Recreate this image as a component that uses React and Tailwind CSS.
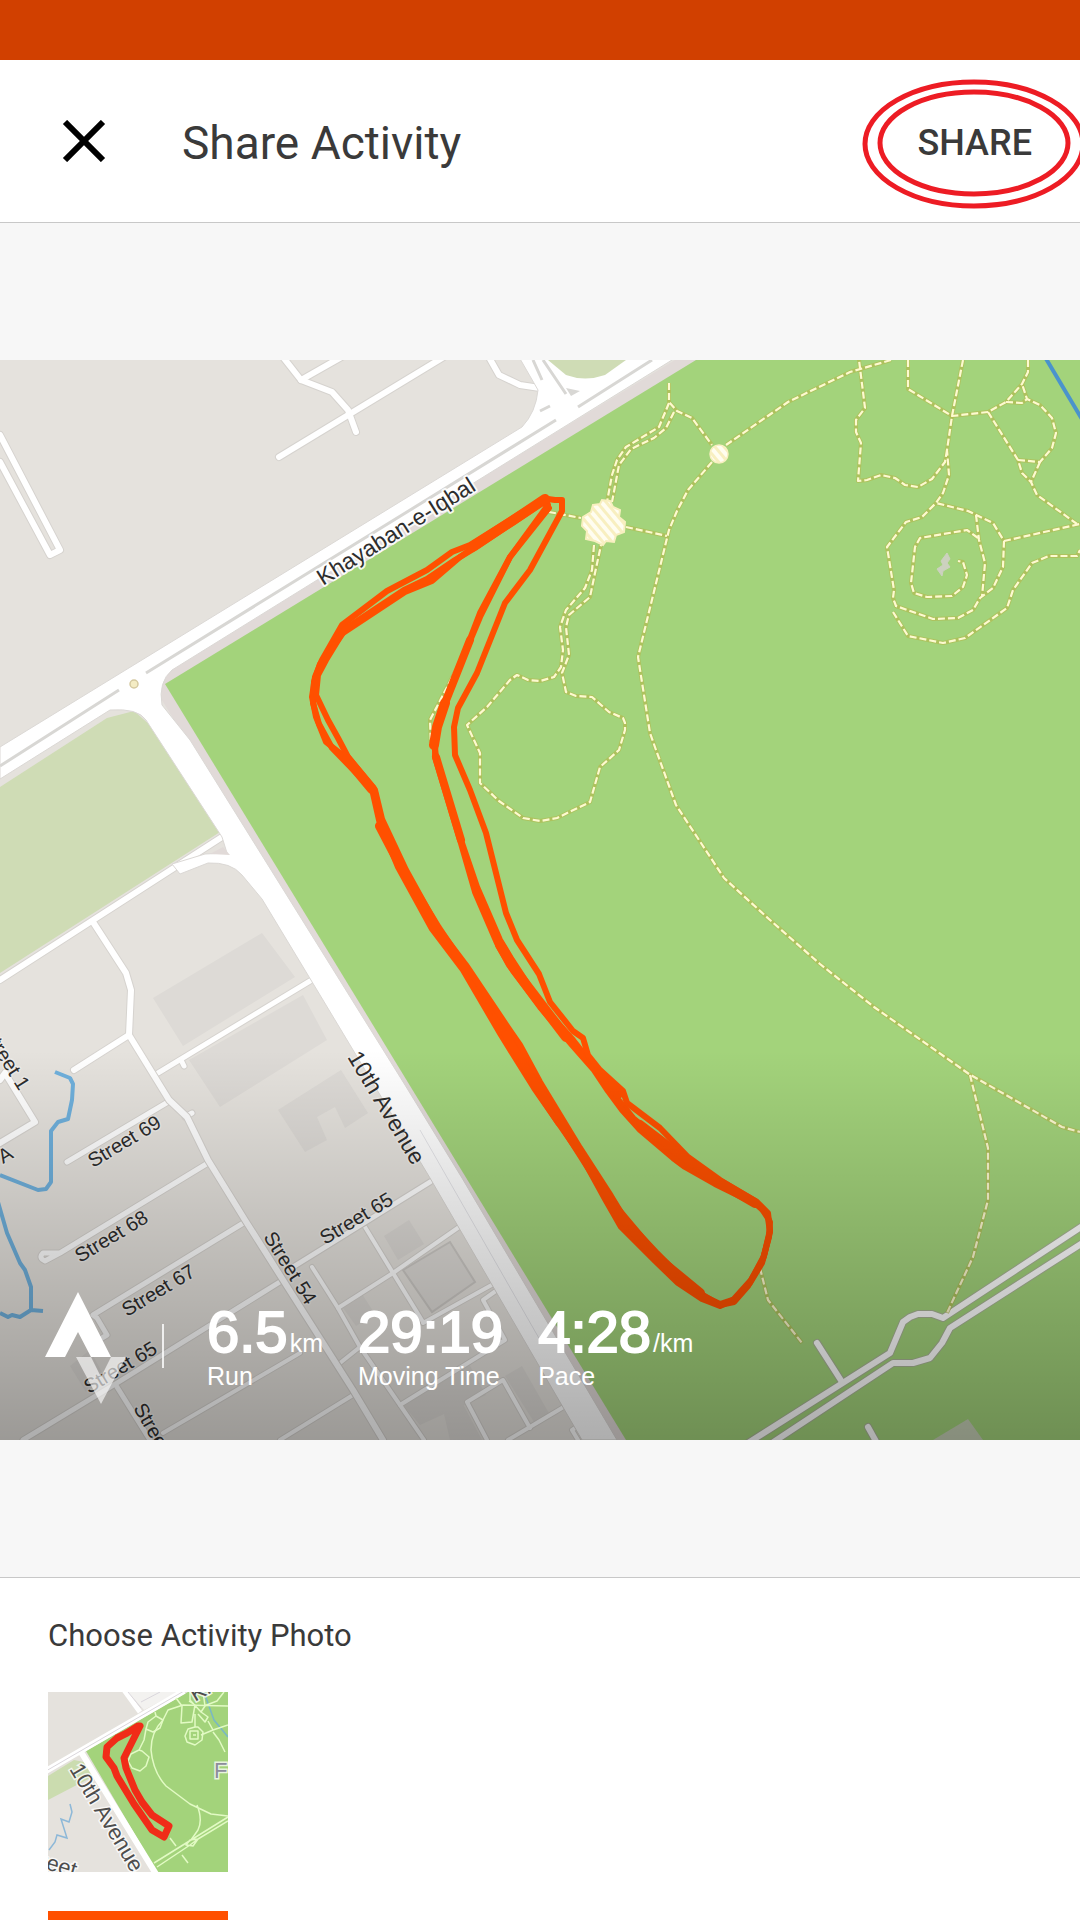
import React from "react";

const trails = [
  "M669 383V402L677 411L692 418L712 445",
  "M669 403L659 427L626 447L617 460L612 475L607 502",
  "M674 412L666 428L654 438L631 449L619 465L612 502",
  "M549 512L581 518",
  "M626 527L667 536",
  "M712 462L688 490L677 511L669 530L638 657L650 733L656 750L676 805L724 878L770 920L820 964L874 1007L969 1074L1062 1127L1080 1132",
  "M726 445L788 402L850 372L891 360",
  "M970 1075L988 1148V1200L973 1257L947 1313",
  "M760 1268L768 1300L802 1343",
  "M594 545L592 570L585 588L566 610L560 627L563 650L561 667L554 677L540 681L528 680L517 675L510 680L487 707L467 725L480 753V783L499 801L523 818L540 821L557 818L590 802L600 767L619 750L625 730V723L623 718L609 712L592 697L576 696L566 692L562 673L569 655L566 627L569 615L590 597L595 573L601 545",
  "M480 614L457 668L430 720L431 747",
  "M858 352L865 408L856 420V432L861 443L858 481L867 480L881 475L895 478L905 485L918 487L932 479L945 462L947 450",
  "M908 360V389L952 416L988 412L1006 402L1022 384L1028 372V360",
  "M963 360L952 416L947 450L949 475L943 493L936 503L922 517L906 522L887 547L894 590L893 598L896 606L933 619L958 618L973 610L980 598L993 588L1003 567L1004 541L993 523L968 511L936 503",
  "M976 515L979 540L985 563L982 597",
  "M978 538L967 530L920 538L915 547L911 583L914 593L927 597L952 596L963 587L967 575L963 562L958 561",
  "M1004 541L1080 524",
  "M893 612L908 636L943 643L965 638L1007 608L1013 590L1032 563L1049 556H1077L1080 550",
  "M988 412L1018 460L1022 473L1031 482L1037 495L1077 524",
  "M1018 460L1040 462L1052 448L1056 433L1052 418L1040 405L1027 399L1022 384",
  "M1006 402L1022 403L1027 399",
  "M1040 462L1031 482",
];

const minorRoads = [
  "M0 435L60 550L50 555L0 462",
  "M279 352L301 380L332 392L348 410L356 432",
  "M301 380L345 355",
  "M279 457L447 355",
  "M486 352L499 375L520 385L540 388",
  "M0 980L222 837",
  "M93 922L126 973L131 990L129 1035L169 1100L187 1117L208 1160L245 1220L283 1280L353 1390L383 1440",
  "M129 1035L74 1070",
  "M0 1080L5 1073L35 1122L0 1143",
];

const streets = [
  "M158 1073L310 981",
  "M181 1060L184 1066",
  "M168 1102L67 1162",
  "M185 1117L192 1113",
  "M208 1163L60 1253L45 1261Q38 1258 43 1253L60 1253",
  "M245 1222L93 1315L97 1318L107 1335L102 1338",
  "M430 1182L293 1267M283 1280L117 1383L23 1440",
  "M117 1387L150 1440",
];

const lanes = [
  "M300 1353L163 1433",
  "M353 1395L280 1440",
  "M312 1267L338 1308L360 1347L400 1405L424 1440",
  "M365 1227L393 1273L423 1322",
  "M338 1308L393 1273L462 1225",
  "M497 1282L423 1323",
  "M500 1288L483 1300L505 1340L400 1405",
  "M572 1402L508 1440",
  "M487 1440L467 1402L503 1380L530 1428",
  "M583 1423L572 1430L578 1440",
  "M340 1363L360 1347",
];

const parkRoads = [
  "M748 1443L890 1353L903 1322L910 1317L918 1314H932L943 1318L1084 1225",
  "M772 1443L893 1363H913L930 1358L942 1343L950 1328L1084 1242",
  "M817 1343L842 1382",
  "M868 1427L878 1445",
];

const buildings = [
  "153,998 262,933 295,977 183,1046",
  "189,1060 303,995 327,1040 220,1107",
  "278,1110 341,1070 368,1113 345,1128 335,1107 317,1117 327,1140 305,1152",
  "384,1236 409,1220 424,1244 398,1260",
  "70,1366 90,1350 105,1378 86,1392",
  "404,1406 468,1362 486,1395 420,1425",
  "343,1308 362,1294 375,1314 356,1326",
  "444,1414 462,1402 482,1440 450,1440",
  "505,1376 522,1366 550,1415 534,1422",
];

const tracks = [
  "M545 498L470 545L452 552L427 570L387 591L342 625L322 660L315 677L312 697L316 717L326 742L345 757L372 789L379 820L403 870L437 930L465 967L506 1033L517 1045L536 1080L580 1150L610 1200L625 1223L656 1255L682 1280L705 1297L720 1304L735 1299L750 1283L762 1263L769 1237L770 1222L765 1212L757 1205L717 1182L687 1163L633 1118L616 1097L599 1073L573 1040L540 1003L512 960L500 940L477 887L461 840L436 757L434 743L439 717L457 672L480 617L510 557L548 505Z",
  "M541 500L486 539L460 557L432 581L405 592L343 633L320 664L314 682L313 703L319 724L332 748L368 785L375 792L380 823L398 867L432 929L463 970L501 1035L534 1088L582 1157L605 1199L621 1227L654 1260L678 1283L702 1299L720 1306L733 1300L751 1280L763 1259L770 1232L768 1218L760 1206L715 1184L685 1167L673 1158L640 1130L622 1110L608 1091L594 1070L572 1045L540 1007L509 965L497 943L475 892L460 840L435 757L436 728L455 678L480 613L510 557L549 508Z",
  "M548 499L555 500L562 500L562 511L530 570L505 603L477 673L458 708L454 727L455 755L470 790L486 833L506 913L517 940L539 974L550 1002L573 1031L583 1038L588 1055L600 1070L623 1091L627 1103L660 1128L688 1157L720 1180L757 1202L768 1213L770 1230L764 1256L748 1286L734 1302L720 1305L703 1295L680 1276L656 1252L625 1219L611 1196L580 1148L540 1082L520 1045L511 1032L466 965L438 928L406 870L382 819L375 790L348 757L338 738L328 720L316 695L318 675L326 660L345 629L404 590L427 579L455 560L475 548Z",
];

const mapLabels = [
  { text: "Street 69", x: 93, y: 1168, angle: -31 },
  { text: "Street 68", x: 80, y: 1263, angle: -31 },
  { text: "Street 67", x: 127, y: 1317, angle: -31 },
  { text: "Street 65", x: 325, y: 1245, angle: -31 },
  { text: "Street 65", x: 89, y: 1394, angle: -31 },
  { text: "Street 54", x: 263, y: 1237, angle: 58 },
  { text: "Street 52", x: 133, y: 1408, angle: 60 },
  { text: "Street 1", x: -18, y: 1032, angle: 58 },
  { text: "A", x: 3, y: 1164, angle: -31 },
];

const stats = [
  { value: "6.5", unit: "km", label: "Run" },
  { value: "29:19", unit: "", label: "Moving Time" },
  { value: "4:28", unit: "/km", label: "Pace" },
];

function CasedRoads({ paths, width, casing = "#d6d3cf" }) {
  return (
    <g fill="none" strokeLinecap="round" strokeLinejoin="round">
      {paths.map((d) => (
        <path key={"c" + d} d={d} stroke={casing} strokeWidth={width + 2} />
      ))}
      {paths.map((d) => (
        <path key={d} d={d} stroke="#fff" strokeWidth={width} />
      ))}
    </g>
  );
}

function ActivityMap() {
  return (
    <svg viewBox="0 360 1080 1080" className="block w-full" role="img" aria-label="Map of the run">
      <defs>
        <linearGradient id="shade" x1="0" y1="0" x2="0" y2="1">
          <stop offset="0" stopColor="#000" stopOpacity="0" />
          <stop offset="1" stopColor="#000" stopOpacity="0.32" />
        </linearGradient>
        <pattern id="plaza" width="7" height="7" patternUnits="userSpaceOnUse" patternTransform="rotate(-40)">
          <rect width="7" height="7" fill="#fffdf0" />
          <rect width="3" height="7" fill="#f8efc0" />
        </pattern>
      </defs>
      <rect y="360" width="1080" height="1080" fill="#e5e2dd" />
      <path d="M165 684L696 360H1080V1440H626Z" fill="#e1dad8" stroke="#e1dad8" strokeWidth="22" />
      <path d="M165 684L696 360H1080V1440H626Z" fill="#a3d37b" />
      <path d="M0 787L107 718L134 711L150 725L220 832L0 973Z" fill="#cfdcb5" />
      <g fill="#dddad6">
        {buildings.map((points) => (
          <polygon key={points} points={points} />
        ))}
      </g>
      <path d="M403 1270L450 1242L475 1282L432 1312Z" fill="#dedbd7" stroke="#cdcac6" strokeWidth="2" />
      <g fill="none" stroke="#6fb0dc" strokeWidth="4" strokeLinejoin="round">
        <path d="M55 1072L70 1078L73 1084L72 1100L68 1119L58 1122L51 1131V1182L46 1189L38 1190L0 1175" />
        <path d="M-2 1202L7 1233L20 1263L25 1270L31 1287V1310L20 1317L12 1315L8 1317L0 1313M31 1310L43 1311" />
        <path d="M1045 357L1083 421" stroke="#4a93cc" />
      </g>

      <CasedRoads paths={lanes} width={4} />
      <CasedRoads paths={streets} width={5} />
      <CasedRoads paths={minorRoads} width={6} />
      <CasedRoads paths={parkRoads} width={6} casing="#a9b596" />

      <path d="M0 747L522 427Q536 412 538 390L519 357H660L672 360L172 670Q158 682 162 705L190 740L405 1085L462 1178L617 1440H582L430 1178L323 1000L262 899L242 875Q231 862 208 863L180 874L172 864L205 854L227 853L222 837L146 720Q138 708 110 710L0 779Z" fill="#fff" stroke="#dbd8d5" strokeWidth="1" />
      <path d="M210 854L223 847L230 855Z" fill="#e1dad8" />
      <path d="M548 360L566 375Q585 382 605 375L626 360Z" fill="#cfdcb5" />
      <g fill="none" stroke="#d8d7d4" strokeWidth="3">
        <path d="M0 766L119 690M146 673L556 420M578 407L652 360M533 360L542 380M543 360L566 394M540 411L550 406" />
      </g>
      <path d="M566 388L580 391L571 396Z" fill="#d8d7d4" />
      <path d="M420 1130L540 1340" stroke="#e6e6ea" strokeWidth="1" />
      <circle cx="134" cy="684" r="4" fill="#f4ecc4" stroke="#d5c9a0" strokeWidth="1.5" />

      <g fill="none" stroke="#b2bb51" strokeWidth="4" strokeOpacity="0.7" strokeLinejoin="round">
        {trails.map((d) => (
          <path key={d} d={d} />
        ))}
      </g>
      <g fill="none" stroke="#fdfad0" strokeWidth="2.2" strokeDasharray="7 3" strokeLinejoin="round">
        {trails.map((d) => (
          <path key={d} d={d} />
        ))}
      </g>
      <circle cx="719" cy="454" r="9" fill="url(#plaza)" stroke="#f8efc0" strokeWidth="1.5" />
      <path d="M593 505L600 504L602 500L610 501L613 507L620 510L619 517L625 522L624 532L616 535L614 542L606 541L603 545L595 541L586 539L587 531L582 526L583 517L591 512Z" fill="url(#plaza)" stroke="#f8efc0" strokeWidth="2" />
      <path d="M947 553L950 559L947 563L950 567L943 571L942 576L937 569L943 565L941 561Z" fill="#ccd1bf" stroke="#ccd1bf" strokeWidth="1" />
      <path d="M933 1440L968 1419L983 1440Z" fill="#c6d0b6" />

      <g
        fill="#2d2d2d"
        stroke="#fff"
        strokeOpacity="0.35"
        strokeWidth="3"
        strokeLinejoin="round"
        paintOrder="stroke"
        fontFamily="'Liberation Sans', Arial, sans-serif"
        fontSize="20"
      >
        <text transform="translate(323 586) rotate(-32)" fontSize="23" strokeOpacity="0.85" strokeWidth="4">
          Khayaban-e-Iqbal
        </text>
        <text transform="translate(347 1057) rotate(59)" fontSize="23">
          10th Avenue
        </text>
        {mapLabels.map(({ text, x, y, angle }) => (
          <text key={text + x} transform={`translate(${x} ${y}) rotate(${angle})`}>
            {text}
          </text>
        ))}
      </g>

      <g fill="none" stroke="#ff5000" strokeWidth="6" strokeLinejoin="round" strokeLinecap="round">
        {tracks.map((d) => (
          <path key={d} d={d} />
        ))}
        <path d="M545 499L512 521L472 547M434 745L437 727L445 703M500 945L515 970L566 1037M380 826L403 870M600 1074L618 1094M614 1207L656 1257L700 1293M717 1181L755 1203M675 1156L684 1163M540 1092L560 1122M347 759L372 789" strokeWidth="10" />
        <path d="M445 703L470 640M436 757L461 840M403 870L438 928L465 968M506 1035L540 1092M560 1122L614 1207M640 1124L715 1181" strokeWidth="8" />
      </g>
      <rect y="1050" width="1080" height="390" fill="url(#shade)" />
    </svg>
  );
}

function StatsOverlay() {
  return (
    <div className="absolute bottom-0 left-0 flex items-start pb-9 pl-[45px] font-['Liberation_Sans',Arial,sans-serif] text-white">
      <svg viewBox="0 0 82 112" className="h-28 w-[82px] shrink-0" role="img" aria-label="Strava">
        <path d="M33 0L66 65H46L33 40L20 65H0Z" fill="#fff" />
        <path d="M31 65H46L56 85L66 65H81L56 112Z" fill="#fff" fillOpacity="0.62" />
      </svg>
      <div className="mt-8 ml-[35px] h-11 w-0.5 bg-white/80" />
      <dl className="mt-3 ml-[43px] flex gap-[35px]">
        {stats.map(({ value, unit, label }) => (
          <div key={label} className="flex flex-col-reverse justify-end">
            <dt className="text-[25px] leading-8">{label}</dt>
            <dd className="text-[58px] leading-14 [-webkit-text-stroke:2px_white]">
              {value}
              {unit && <span className="ml-0.5 text-[25px] leading-none [-webkit-text-stroke:0px]">{unit}</span>}
            </dd>
          </div>
        ))}
      </dl>
    </div>
  );
}

function MapThumbnail() {
  return (
    <svg viewBox="0 0 180 180" className="block size-full" aria-hidden="true">
      <rect width="180" height="180" fill="#e5e2dd" />
      <path d="M38 59L140 0H180V180H109Z" fill="#a3d37b" />
      <path d="M0 84L26 68L36 70L46 84L0 108Z" fill="#cbdcaf" />
      <path d="M80 0L96 18L130 0Z" fill="#f3f2f0" />
      <g fill="none" stroke="#fff">
        <path d="M-2 79L136 -1M33 60L108 182" strokeWidth="6" />
        <path d="M76 -2L92 20" strokeWidth="5" />
        <path d="M-2 79L136 -1M93 10L112 0M80 0L93 16" stroke="#dad6dc" strokeWidth="1" />
      </g>
      <path d="M156 0L166 28L180 45" fill="none" stroke="#7ab8c4" strokeWidth="1.5" />
      <path d="M22 112L24 120L21 130L13 127L19 146L9 143L7 150L1 158" fill="none" stroke="#8db8d8" strokeWidth="1.5" />
      <g fill="none" stroke="#e2fac4" strokeWidth="1.5" strokeLinejoin="round">
        <path d="M107 20L108 24L115 28L120 18L135 13L180 14M115 28Q103 40 103 58Q105 80 118 94L142 112L163 122L180 124M149 113Q155 128 150 138L143 148" />
        <path d="M108 24L100 30L98 37L105 40L112 36L115 28M98 37L96 48L91 58L83 62L80 69L84 76L92 79L98 74L101 65L94 59L91 58" />
        <path d="M128 6L134 14L133 31L144 30L147 13L141 9M142 0V8L153 20L157 14L155 0M153 20L160 25L157 30L150 22M156 14L169 9L176 0M160 29L165 38L180 33M165 40L171 48L177 60M147 22V35L140 37L137 44L139 50L147 53L154 48L155 40L150 35H147M142 39H150V47H142ZM153 43L165 38M145 43H148" />
        <path d="M106 171L180 125M109 175L142 153L150 147L180 129M142 148L150 147L145 154L138 153ZM122 146L128 154M134 163L140 171" />
      </g>
      <g fill="#4d4d4d" stroke="#fff" strokeWidth="3" strokeOpacity="0.75" paintOrder="stroke" fontFamily="'Liberation Sans', Arial, sans-serif" fontSize="22">
        <text transform="translate(21 77) rotate(59)">10th Avenue</text>
        <text transform="translate(-10 175) rotate(16)">reet</text>
        <text transform="translate(147 10) rotate(-30)">Kh</text>
        <text x="166" y="86" fill="#8d8d9b">F</text>
      </g>
      <path d="M90 34L79 41L69 46L59 55L58 65L66 76L69 84L86 112L104 138L116 145L121 134L104 123L94 110L87 98L78 76L76 66L86 46L92 34Z" fill="none" stroke="#f02c18" strokeWidth="7" strokeLinejoin="round" />
    </svg>
  );
}

export default function App() {
  return (
    <div className="flex h-screen flex-col overflow-hidden bg-white font-[Roboto,sans-serif] text-[#3a3a3a]">
      <div className="h-15 shrink-0 bg-[#d14000]" />
      <header className="flex shrink-0 items-center border-b border-[#c8c8c8] pt-[47px] pr-12 pb-[43px] pl-15">
        <button type="button" aria-label="Close" className="pt-3 pb-4">
          <svg viewBox="0 0 48 42" className="h-[42px] w-12">
            <path d="M5 2L43 40M43 2L5 40" stroke="#000" strokeWidth="6" fill="none" />
          </svg>
        </button>
        <h1 className="ml-[74px] grow text-[46px] leading-[72px]">Share Activity</h1>
        <div className="relative">
          <button type="button" className="block text-4xl font-medium">SHARE</button>
          <svg
            viewBox="0 0 226 132"
            className="pointer-events-none absolute top-1/2 left-1/2 h-[132px] w-[226px] max-w-none -translate-x-1/2 -translate-y-1/2"
            aria-hidden="true"
          >
            <g fill="none" stroke="#ed1c24" strokeWidth="5">
              <ellipse cx="112" cy="67" rx="109" ry="62" />
              <ellipse cx="112" cy="66" rx="94" ry="51" />
            </g>
          </svg>
        </div>
      </header>

      <main className="flex min-h-0 grow flex-col">
        <section className="shrink-0 border-b border-[#c8c8c8] bg-[#f7f7f7] py-[137px]">
          <div className="relative">
            <ActivityMap />
            <StatsOverlay />
          </div>
        </section>

        <section className="shrink-0 px-12 pt-[38px]">
          <h2 className="text-[31px] leading-10">Choose Activity Photo</h2>
          <div className="mt-9 flex flex-col items-start gap-[39px]">
            <button type="button" aria-label="Map photo" className="block size-[180px]">
              <MapThumbnail />
            </button>
            <button type="button" aria-label="Orange background" className="block size-[180px] bg-[#ff5000]" />
          </div>
        </section>
      </main>
    </div>
  );
}
